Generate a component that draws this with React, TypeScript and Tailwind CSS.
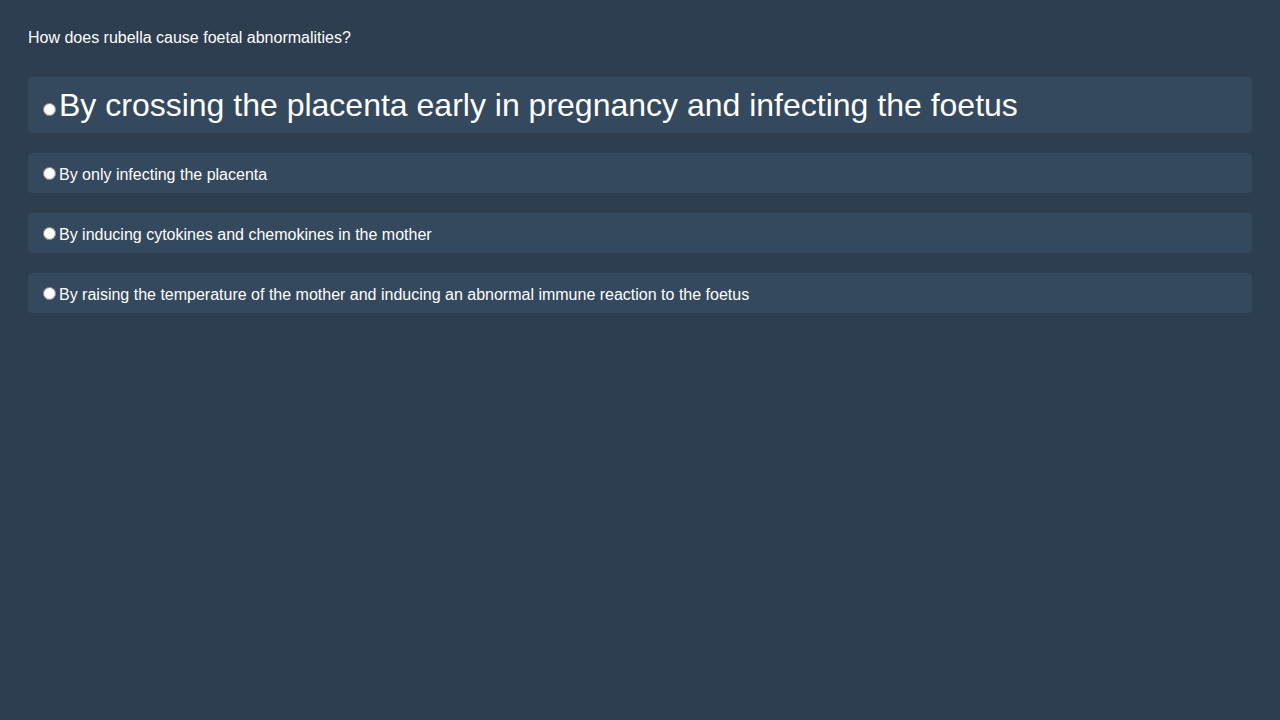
import React, { useState } from 'react'

const options = [
  'By crossing the placenta early in pregnancy and infecting the foetus',
  'By only infecting the placenta',
  'By inducing cytokines and chemokines in the mother',
  'By raising the temperature of the mother and inducing an abnormal immune reaction to the foetus',
]

export default function App() {
  const [hovered] = useState(0)
  const [picked, setPicked] = useState<number | null>(null)

  return (
    <div
      className="min-h-screen bg-[#2c3e50] px-7 pt-[26px] text-white leading-[normal]"
      style={{ fontFamily: '"Liberation Sans", Arial, sans-serif' }}
    >
      <p className="mb-[27px] text-base">How does rubella cause foetal abnormalities?</p>
      <div className="flex flex-col gap-5">
        {options.map((opt, i) => (
          <label
            key={opt}
            className={`block rounded bg-[#34495e] px-2.5 ${i === hovered ? 'h-14 pt-2.5 text-[32px]' : 'h-10 pt-2.5 text-base'}`}
          >
            <input
              type="radio"
              name="answer"
              className="mt-[3px] mr-[3px] ml-[5px]"
              checked={picked === i}
              onChange={() => setPicked(i)}
            />
            <span>{opt}</span>
          </label>
        ))}
      </div>
    </div>
  )
}
